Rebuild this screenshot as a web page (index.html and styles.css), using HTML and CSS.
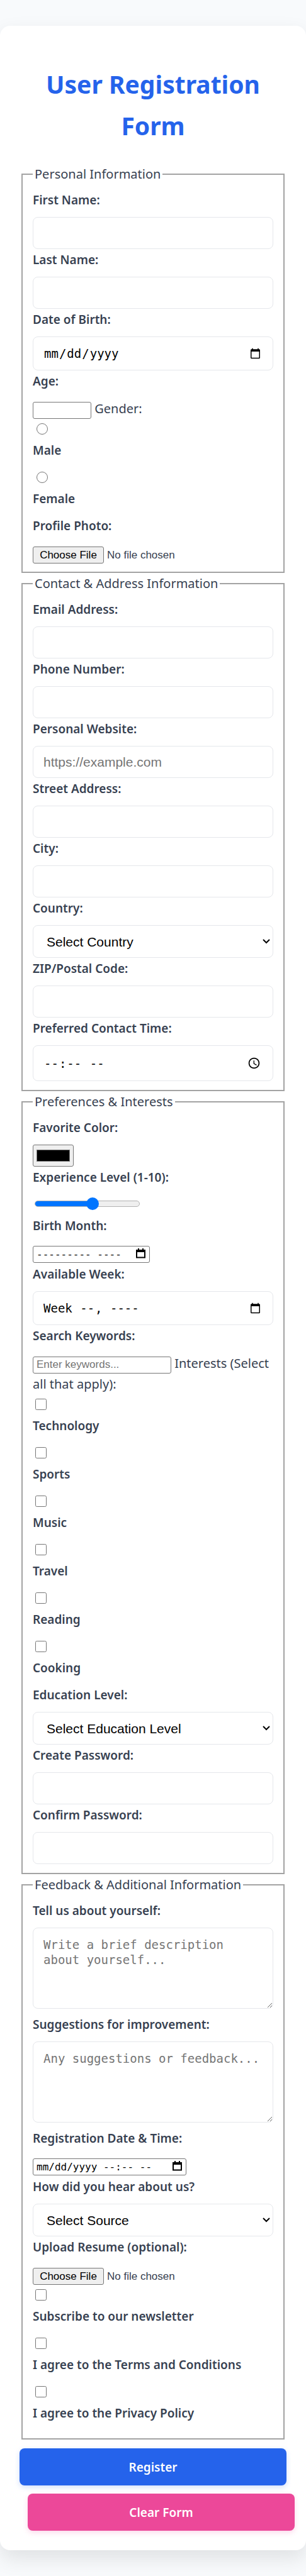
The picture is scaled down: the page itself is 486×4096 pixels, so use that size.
FILE: index.html
```html
<!DOCTYPE html>
<html lang="en-US">
<head>
<meta charset="utf-8">
<meta name="viewport" content="width=device-width, initial-scale=1">
<title>User Registration Form</title>
<link rel="stylesheet" href="styles.css">
</head>
<body>
<main class="card">
<h1 class="title">User Registration Form</h1>
<form>
  <fieldset class="group">
    <legend class="legend">Personal Information</legend>
    <div class="field"><label class="label" for="first">First Name:</label><input class="control" type="text" id="first"></div>
    <div class="field"><label class="label" for="last">Last Name:</label><input class="control" type="text" id="last"></div>
    <div class="field"><label class="label" for="dob">Date of Birth:</label><input class="control control-date" type="date" id="dob"></div>
    <label class="label" for="age">Age:</label>
    <div class="line"><input class="mini mini-age" type="number" id="age"> <span>Gender:</span></div>
    <div class="choice"><input class="radio" type="radio" name="gender" id="male"><label class="label" for="male">Male</label></div>
    <div class="choice"><input class="radio" type="radio" name="gender" id="female"><label class="label" for="female">Female</label></div>
    <label class="label" for="photo">Profile Photo:</label>
    <div class="line"><input class="file" type="file" id="photo"></div>
  </fieldset>

  <fieldset class="group">
    <legend class="legend">Contact &amp; Address Information</legend>
    <div class="field"><label class="label" for="email">Email Address:</label><input class="control" type="email" id="email"></div>
    <div class="field"><label class="label" for="phone">Phone Number:</label><input class="control" type="tel" id="phone"></div>
    <div class="field"><label class="label" for="site">Personal Website:</label><input class="control" type="url" id="site" placeholder="https://example.com"></div>
    <div class="field"><label class="label" for="street">Street Address:</label><input class="control" type="text" id="street"></div>
    <div class="field"><label class="label" for="city">City:</label><input class="control" type="text" id="city"></div>
    <div class="field"><label class="label" for="country">Country:</label>
      <div class="select-box"><select class="control control-select" id="country"><option>Select Country</option></select><svg class="chevron" viewBox="0 0 12 8" aria-hidden="true"><path d="M1 1l5 5 5-5"/></svg></div></div>
    <div class="field"><label class="label" for="zip">ZIP/Postal Code:</label><input class="control" type="text" id="zip"></div>
    <div class="field"><label class="label" for="time">Preferred Contact Time:</label><input class="control control-time" type="time" id="time"></div>
  </fieldset>

  <fieldset class="group">
    <legend class="legend">Preferences &amp; Interests</legend>
    <div class="field"><label class="label" for="color">Favorite Color:</label><input class="color" type="color" id="color" value="#000000"></div>
    <label class="label" for="level">Experience Level (1-10):</label>
    <div class="line line-tall"><input class="range" type="range" id="level" min="1" max="10" value="6"></div>
    <label class="label" for="month">Birth Month:</label>
    <div class="line line-tall"><span class="picker"><input class="mini mini-mono mini-month" type="text" id="month" value="--------- ----"><svg class="calendar" viewBox="0 0 15 16" aria-hidden="true"><path class="calendar-page" d="M1 3h13v11.5H1z"/><path d="M0 2h15v4H0zM3 0h2v3H3zM10 0h2v3h-2z"/></svg></span></div>
    <div class="field"><label class="label" for="week">Available Week:</label><input class="control control-date" type="week" id="week"></div>
    <label class="label" for="search">Search Keywords:</label>
    <div class="line"><input class="mini mini-search" type="search" id="search" placeholder="Enter keywords..."> Interests (Select all that apply):</div>
    <div class="choice"><input class="check" type="checkbox" id="technology"><label class="label" for="technology">Technology</label></div>
    <div class="choice"><input class="check" type="checkbox" id="sports"><label class="label" for="sports">Sports</label></div>
    <div class="choice"><input class="check" type="checkbox" id="music"><label class="label" for="music">Music</label></div>
    <div class="choice"><input class="check" type="checkbox" id="travel"><label class="label" for="travel">Travel</label></div>
    <div class="choice"><input class="check" type="checkbox" id="reading"><label class="label" for="reading">Reading</label></div>
    <div class="choice"><input class="check" type="checkbox" id="cooking"><label class="label" for="cooking">Cooking</label></div>
    <div class="field"><label class="label" for="education">Education Level:</label>
      <div class="select-box"><select class="control control-select" id="education"><option>Select Education Level</option></select><svg class="chevron" viewBox="0 0 12 8" aria-hidden="true"><path d="M1 1l5 5 5-5"/></svg></div></div>
    <div class="field"><label class="label" for="password">Create Password:</label><input class="control" type="password" id="password"></div>
    <div class="field"><label class="label" for="confirm">Confirm Password:</label><input class="control" type="password" id="confirm"></div>
  </fieldset>

  <fieldset class="group">
    <legend class="legend">Feedback &amp; Additional Information</legend>
    <div class="field field-area"><label class="label" for="about">Tell us about yourself:</label><textarea class="control control-area" id="about" placeholder="Write a brief description about yourself..."></textarea></div>
    <div class="field field-area"><label class="label" for="suggest">Suggestions for improvement:</label><textarea class="control control-area" id="suggest" placeholder="Any suggestions or feedback..."></textarea></div>
    <label class="label" for="when">Registration Date &amp; Time:</label>
    <div class="line line-tall"><span class="picker"><input class="mini mini-mono mini-when" type="text" id="when" value="mm/dd/yyyy --:-- --"><svg class="calendar" viewBox="0 0 15 16" aria-hidden="true"><path class="calendar-page" d="M1 3h13v11.5H1z"/><path d="M0 2h15v4H0zM3 0h2v3H3zM10 0h2v3h-2z"/></svg></span></div>
    <div class="field"><label class="label" for="source">How did you hear about us?</label>
      <div class="select-box"><select class="control control-select" id="source"><option>Select Source</option></select><svg class="chevron" viewBox="0 0 12 8" aria-hidden="true"><path d="M1 1l5 5 5-5"/></svg></div></div>
    <label class="label" for="resume">Upload Resume (optional):</label>
    <div class="line"><input class="file" type="file" id="resume"></div>
    <div class="choice"><input class="check" type="checkbox" id="news"><label class="label" for="news">Subscribe to our newsletter</label></div>
    <div class="choice"><input class="check" type="checkbox" id="terms"><label class="label" for="terms">I agree to the Terms and Conditions</label></div>
    <div class="choice"><input class="check" type="checkbox" id="privacy"><label class="label" for="privacy">I agree to the Privacy Policy</label></div>
  </fieldset>

  <button class="button button-submit" type="submit">Register</button>
  <button class="button button-reset" type="reset">Clear Form</button>
</form>
</main>
</body>
</html>
```
FILE: styles.css
```css
* { box-sizing: border-box; }

body {
  margin: 0;
  padding: 41px 0;
  background: #f8fafc;
  color: #374151;
  font: 20px/33px "Noto Sans", "Open Sans", sans-serif;
}

.card {
  padding: 60px 31px 31px;
  background: #fff;
  border-radius: 16px;
  box-shadow: 0 13px 32px rgba(0, 0, 0, 0.1);
}

.title {
  margin: 0 0 27px;
  color: #2563eb;
  font-size: 39px;
  font-weight: 700;
  line-height: 66px;
  text-align: center;
}

.group {
  min-width: 0;
  margin: 0 3px;
  padding: 9px 16px 13px;
  border: 2px solid #a3a3a3;
}

.legend { padding: 0 3px; }

.label {
  display: block;
  margin-bottom: 10px;
  font-size: 19px;
  font-weight: 600;
}

.field { margin-bottom: 1px; }
.field-area { margin-bottom: 9px; }

.control {
  display: block;
  width: 100%;
  height: 51px;
  margin: 0;
  padding: 0 16px;
  border: 1px solid #e5e7eb;
  border-radius: 8px;
  background: #fff;
  color: #000;
  font: 21px "Liberation Sans", Arial, sans-serif;
}

.control::placeholder, .mini::placeholder { color: #757575; }

.control-date, .control-time { font: 19px "DejaVu Sans Mono", monospace; }
.control-date { height: 54px; }
.control-time { height: 57px; }
.control-time::-webkit-calendar-picker-indicator { width: 21px; height: 21px; }

.control-area {
  height: 129px;
  padding: 14px 16px;
  font: 19px/24px "DejaVu Sans Mono", monospace;
  resize: vertical;
}

.select-box { position: relative; }
.control-select { height: 52px; padding: 0 21px; appearance: none; }

.chevron {
  position: absolute;
  top: 22px;
  right: 5px;
  width: 12px;
  height: 8px;
  fill: none;
  stroke: #000;
  stroke-width: 2;
  pointer-events: none;
}

.line-tall { height: 34px; }

.mini {
  height: 27px;
  margin: 0;
  padding: 0 5px;
  border: 1px solid #767676;
  border-radius: 3px;
  background: #fff;
  color: #000;
  font: 17px "Liberation Sans", Arial, sans-serif;
}

.mini-mono { font: 16px "DejaVu Sans Mono", monospace; }
.mini-age { width: 93px; }
.mini-search { width: 220px; }
.mini-month { width: 186px; }
.mini-when { width: 244px; }

.picker { position: relative; display: inline-block; }

.calendar {
  position: absolute;
  right: 7px;
  bottom: 8px;
  width: 15px;
  height: 16px;
  pointer-events: none;
}

.calendar-page { fill: none; stroke: #000; stroke-width: 2; }

.choice { padding-top: 7px; }
.radio, .check { display: block; width: 18px; height: 18px; margin: 0 6px 9px; }
.check { margin: 0 4px 9px; }

.file {
  width: 100%;
  height: 33px;
  padding-top: 6px;
  vertical-align: top;
  font: 17px "Liberation Sans", Arial, sans-serif;
}

.file::file-selector-button {
  width: 113px;
  height: 27px;
  margin-right: 5px;
  padding: 0;
  border: 1px solid #767676;
  border-radius: 3px;
  background: #efefef;
  color: #000;
  font: inherit;
}

.color {
  display: block;
  width: 65px;
  height: 35px;
  padding: 0;
  border: 1px solid #767676;
  border-radius: 3px;
  background: #efefef;
}

.color::-webkit-color-swatch-wrapper { padding: 7px 5px; }
.color::-webkit-color-swatch { border: 1px solid #777; }

.range {
  display: block;
  width: 167px;
  height: 30px;
  margin: 0 3px;
  background: transparent;
  appearance: none;
}

.range::-webkit-slider-runnable-track {
  height: 10px;
  border: 1px solid #b2b2b2;
  border-radius: 5px;
  background: linear-gradient(to right, #0075ff 55%, #efefef 55%) border-box;
}

.range::-webkit-slider-thumb {
  width: 20px;
  height: 20px;
  margin-top: -6px;
  border-radius: 50%;
  background: #0075ff;
  appearance: none;
}

.button {
  display: block;
  width: 100%;
  height: 59px;
  border: 0;
  border-radius: 8px;
  color: #fff;
  font: 600 19px "Noto Sans", "Open Sans", sans-serif;
}

.button-submit {
  margin-top: 14px;
  background: #2563eb;
  box-shadow: 0 3px 8px rgba(37, 99, 235, 0.2);
}

.button-reset {
  margin: 13px 0 0 13px;
  background: #ec4899;
  box-shadow: 0 3px 8px rgba(236, 72, 153, 0.2);
}
```
